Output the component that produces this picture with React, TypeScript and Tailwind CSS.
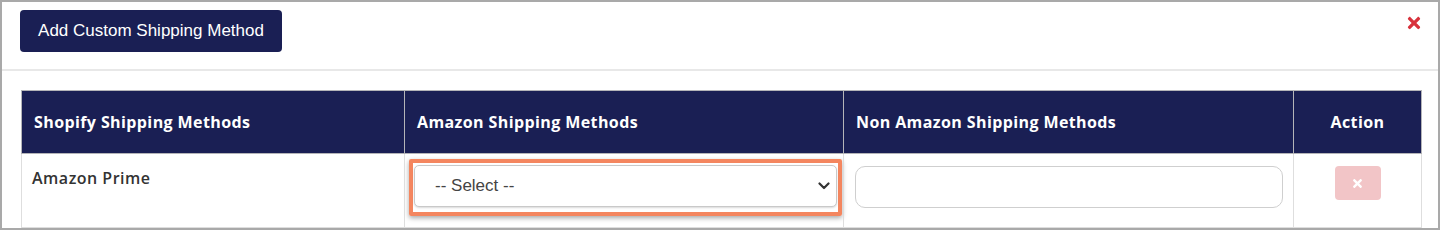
import { FaTimes } from 'react-icons/fa';

const columns = [
  { label: 'Shopify Shipping Methods', width: 'w-[383px]', align: 'text-left pl-3' },
  { label: 'Amazon Shipping Methods', width: 'w-[439px]', align: 'text-left pl-3' },
  { label: 'Non Amazon Shipping Methods', width: 'w-[450px]', align: 'text-left pl-3' },
  { label: 'Action', width: 'w-[128px]', align: 'text-center' },
];

function App() {
  return (
    <div className="h-[230px] w-[1440px] overflow-hidden border-2 border-[#a9a9a9] bg-white font-['Liberation_Sans',sans-serif]">
      <div className="flex items-start justify-between border-b-2 border-[#e8e8e8] pb-[17px] pl-[18px] pr-[15px] pt-[8px]">
        <button className="h-[42px] w-[262px] rounded-[4px] bg-[#1a1f54] text-[17px] text-white">
          Add Custom Shipping Method
        </button>
        <FaTimes className="mt-[4px] text-[18px] text-[#d8323c]" />
      </div>

      <div className="pl-[19px] pt-[19px]">
        <table className="table-fixed border-collapse font-['Open_Sans',sans-serif]">
          <thead>
            <tr className="h-[63px] bg-[#1a1f54]">
              {columns.map((col) => (
                <th
                  key={col.label}
                  className={`${col.width} ${col.align} border border-[#b4b4b8] text-[16px] font-bold tracking-[0.4px] text-white`}
                >
                  {col.label}
                </th>
              ))}
            </tr>
          </thead>
          <tbody>
            <tr className="h-[74px]">
              <td className="border border-[#dedede] pl-[10px] pt-[12px] align-top text-[16px] font-semibold tracking-[0.5px] text-[#333]">
                Amazon Prime
              </td>
              <td className="border border-[#dedede] pl-[4px] pr-[1px] pt-[5px] align-top">
                <div className="rounded-[2px] border-[4px] border-[#f4865f] px-[1px] pb-[5px] pt-[2px] shadow-[0_2px_5px_rgba(0,0,0,0.35)]">
                  <div className="flex h-[42px] items-center justify-between rounded-[5px] border border-[#c9c9c9] bg-white pl-[20px] pr-[6px] shadow-[0_1px_2px_rgba(0,0,0,0.15)] font-['Liberation_Sans',sans-serif] text-[17px] text-[#444]">
                    <span>-- Select --</span>
                    <svg width="12" height="8" viewBox="0 0 12 8" fill="none">
                      <path d="M1.5 1.5L6 6L10.5 1.5" stroke="#333" strokeWidth="2.2" strokeLinecap="round" strokeLinejoin="round" />
                    </svg>
                  </div>
                </div>
              </td>
              <td className="border border-[#dedede] pl-[11px] pr-[10px] pt-[12px] align-top">
                <input
                  type="text"
                  className="h-[42px] w-full rounded-[10px] border border-[#cfcfcf] bg-white px-3 outline-none"
                />
              </td>
              <td className="border border-[#dedede] pt-[12px] align-top text-center">
                <button className="inline-flex h-[34px] w-[46px] items-center justify-center rounded-[4px] bg-[#f2c5c7] text-white">
                  <FaTimes className="text-[13px]" />
                </button>
              </td>
            </tr>
          </tbody>
        </table>
      </div>
    </div>
  );
}

export default App;
